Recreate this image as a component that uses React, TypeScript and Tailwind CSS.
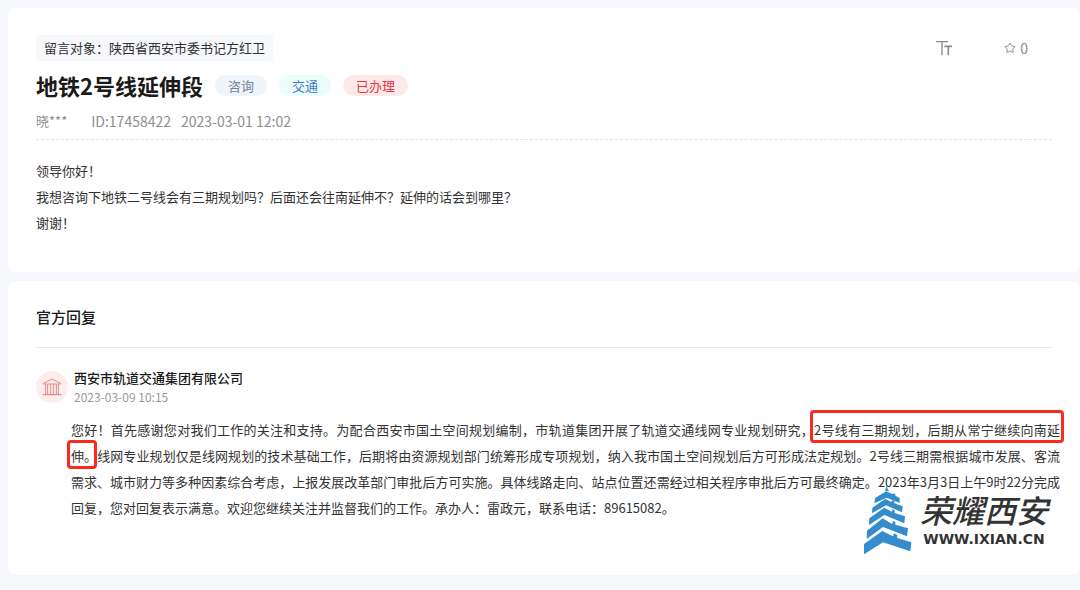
import React from 'react';
import { Star } from 'lucide-react';

const tags = [
  { label: '咨询', className: 'bg-[#eff3fa] text-[#71839d]' },
  { label: '交通', className: 'bg-[#ebfdfb] text-[#4779c0]' },
  { label: '已办理', className: 'bg-[#fde8ea] text-[#dc3c41]' },
];

const messageLines = [
  '领导你好！',
  '我想咨询下地铁二号线会有三期规划吗？后面还会往南延伸不？延伸的话会到哪里？',
  '谢谢！',
];

const FontSizeIcon: React.FC = () => (
  <svg className="w-4 h-4" viewBox="0 0 48 48" fill="none" stroke="currentColor" aria-hidden="true">
    <path strokeWidth={4} d="M0 5h36M18 5v41" />
    <path strokeWidth={5} d="M25 19h23M37 19v27" />
  </svg>
);

const InstitutionIcon: React.FC = () => (
  <svg className="w-5 h-5" viewBox="0 0 60 60" fill="none" stroke="currentColor" strokeWidth={3} aria-hidden="true">
    <path strokeLinejoin="round" d="M4 19L30 6l26 13v2H4z" />
    <path d="M11 22v30M17 22v30M26 22v30M34 22v30M43 22v30M49 22v30" />
    <path strokeLinecap="round" d="M4 53h52" strokeWidth={4} />
  </svg>
);

const TowerLogo: React.FC = () => (
  <svg className="w-12 h-[70px] shrink-0" viewBox="42 26 144 210" fill="#348ccc" aria-hidden="true">
    <path d="M110 26l2 13 5 8-13-1 4-7z" />
    <path d="M75 68L109 48l20 9 2-3 5 2v5l13 7v15l-39-16-37 17z" />
    <path d="M67 97l38-26 19 9 3-5 6 1v8l25 9-2 18-48-21-42 24z" />
    <path d="M58 129l45-32 22 12 3-7 6 3v8l31 10-2 21-60-25-46 30z" />
    <path d="M51 166l47-37 28 17 4-9 6 3v8l38 11-3 24-72-28-49 36z" />
    <path d="M42 206l55-39 32 16 3-9 9 4 1 10 42 13-3 27-82-27-57 36z" />
  </svg>
);

/** Cadre rouge autour d'un passage de la réponse */
const Highlight: React.FC<{ className: string; children: React.ReactNode }> = ({ className, children }) => (
  <mark className="relative bg-transparent text-inherit">
    {children}
    <span className={`absolute rounded-sm border-[3px] border-[#fb2a1c] ${className}`} />
  </mark>
);

const MessageCard: React.FC = () => (
  <article className="rounded-lg bg-white px-7 pt-[27px] pb-9">
    <header className="border-b border-dashed border-[#e4e4e4] pb-2">
      <div className="flex items-center justify-between">
        <p className="rounded-xs bg-[#f6f8fb] px-2 text-[13px] leading-[26px] text-[#333]">
          留言对象：陕西省西安市委书记方红卫
        </p>
        <div className="flex items-center gap-13 pr-6 text-[#8c8c8c]">
          <button type="button" aria-label="字体大小">
            <FontSizeIcon />
          </button>
          <button type="button" className="flex items-center gap-1 text-sm" aria-label="收藏 0">
            <Star size={12} strokeWidth={2} />
            <span>0</span>
          </button>
        </div>
      </div>

      <div className="mt-2 flex h-8 items-center gap-3">
        <h1 className="text-[22px] leading-8 font-bold text-[#1a1a1a]">地铁2号线延伸段</h1>
        {tags.map((tag) => (
          <span key={tag.label} className={`rounded-full px-[13px] text-[13px] leading-[21px] ${tag.className}`}>
            {tag.label}
          </span>
        ))}
      </div>

      <div className="mt-2.5 flex text-sm leading-5 text-[#8f8f8f]">
        <span className="mr-6 text-[13px]">晓***</span>
        <span className="mr-2.5">ID:17458422</span>
        <time>2023-03-01 12:02</time>
      </div>
    </header>

    <div className="mt-[18px] text-[13px] leading-[26px] text-[#333]">
      {messageLines.map((line) => (
        <p key={line}>{line}</p>
      ))}
    </div>
  </article>
);

const ReplyCard: React.FC = () => (
  <section className="relative rounded-lg bg-white px-7 pt-6 pb-[54px]">
    <h2 className="border-b border-[#e8e8e8] pb-[18px] text-[15px] leading-6 font-medium text-[#1a1a1a]">
      官方回复
    </h2>

    <div className="mt-5 flex items-center gap-1.5">
      <div className="flex h-8 w-8 items-center justify-center rounded-full bg-[#fdeeed] text-[#e58a86]">
        <InstitutionIcon />
      </div>
      <div>
        <h3 className="text-[13px] leading-5 font-medium text-[#1a1a1a]">西安市轨道交通集团有限公司</h3>
        <time className="block text-xs leading-[18px] text-[#999]">2023-03-09 10:15</time>
      </div>
    </div>

    <p className="mt-[11px] -mr-2 pl-[35px] text-justify text-[13px] leading-[26px] text-[#333]">
      您好！首先感谢您对我们工作的关注和支持。为配合西安市国土空间规划编制，市轨道集团开展了轨道交通线网专业规划研究，
      <Highlight className="-inset-x-1 -top-2.5 -bottom-1">2号线有三期规划，后期从常宁继续向南延</Highlight>
      <Highlight className="-left-1 right-0 -top-1.5 -bottom-1">伸。</Highlight>
      线网专业规划仅是线网规划的技术基础工作，后期将由资源规划部门统筹形成专项规划，纳入我市国土空间规划后方可形成法定规划。2号线三期需根据城市发展、客流需求、城市财力等多种因素综合考虑，上报发展改革部门审批后方可实施。具体线路走向、站点位置还需经过相关程序审批后方可最终确定。2023年3月3日上午9时22分完成回复，您对回复表示满意。欢迎您继续关注并监督我们的工作。承办人：雷政元，联系电话：89615082。
    </p>

    {/* Filigrane du site */}
    <div className="absolute right-8 bottom-[21px] flex items-center gap-2 text-[#333]">
      <TowerLogo />
      <div className="flex flex-col items-center gap-1">
        <span className="text-[32px] leading-9 font-medium italic">荣耀西安</span>
        <span className="font-['DejaVu_Sans'] text-sm leading-4 font-bold">WWW.IXIAN.CN</span>
      </div>
    </div>
  </section>
);

const App: React.FC = () => {
  return (
    <main
      lang="zh-CN"
      className="flex min-h-screen flex-col gap-[9px] bg-[#f6f8fb] pt-2 pb-[15px] pl-2 font-['Noto_Sans_CJK_SC',sans-serif]"
    >
      <MessageCard />
      <ReplyCard />
    </main>
  );
};

export default App;
